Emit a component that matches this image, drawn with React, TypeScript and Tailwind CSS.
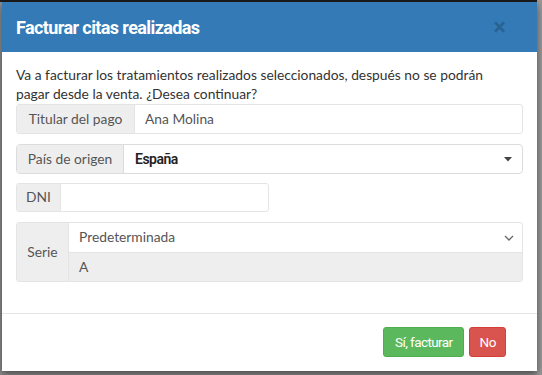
import React from "react";

export default function App() {
  const body = { fontFamily: "Lato, 'Liberation Sans', sans-serif" };
  const rob = { fontFamily: "Roboto, 'Liberation Sans', sans-serif" };
  return (
    <div className="relative w-[542px] h-[375px] overflow-hidden bg-[#8f8f8f]">
      <div className="absolute left-0 top-0 w-full h-[2px] bg-[#1b1b1b]" />
      <div className="absolute right-0 top-0 w-[5px] h-full bg-[#9a9a9a]" />
      <div className="absolute left-[2px] top-[2px] w-[535px] h-[369px] bg-white flex flex-col shadow-[0_3px_8px_rgba(0,0,0,0.5)]">
        <div className="h-[50px] bg-[#337ab7] flex items-center justify-between pl-[14px] pr-[31px] shrink-0">
          <span className="text-white font-bold text-[18px] tracking-[-0.6px]" style={rob}>Facturar citas realizadas</span>
          <span className="text-[24px] font-bold leading-none text-black/20" style={rob}>×</span>
        </div>
        <div className="px-[14px] pt-[13px] text-[13.8px] text-[#333] flex-1" style={body}>
          <p className="leading-[19px] whitespace-nowrap">
            Va a facturar los tratamientos realizados seleccionados, después no se podrán
            <br />
            pagar desde la venta. ¿Desea continuar?
          </p>
          <div className="mt-[1px] flex h-[30px] w-[507px] border border-[#e4e4e4] rounded-[3px] overflow-hidden">
            <div className="w-[118px] bg-[#eeeeee] border-r border-[#e4e4e4] flex items-center justify-center text-[#555]">Titular del pago</div>
            <div className="flex-1 flex items-center pl-[10px] text-[#555]">Ana Molina</div>
          </div>
          <div className="mt-[10px] flex h-[30px] w-[507px] border border-[#dcdcdc] rounded-[4px] overflow-hidden">
            <div className="w-[107px] bg-[#eeeeee] border-r border-[#dcdcdc] flex items-center justify-center text-[#555]">País de origen</div>
            <div className="flex-1 flex items-center justify-between pl-[11px] pr-[10px]">
              <span className="text-[#222] font-semibold text-[14px] tracking-[-0.5px]" style={rob}>España</span>
              <svg width="8" height="5" viewBox="0 0 8 5"><path d="M0 0 H8 L4 4.5 Z" fill="#444" /></svg>
            </div>
          </div>
          <div className="mt-[9px] flex h-[29px] w-[253px] border border-[#e4e4e4] rounded-[3px] overflow-hidden">
            <div className="w-[44px] bg-[#eeeeee] border-r border-[#e4e4e4] flex items-center justify-center text-[#555]">DNI</div>
            <div className="flex-1" />
          </div>
          <div className="mt-[10px] flex h-[60px] w-[507px] border border-[#e4e4e4] rounded-[3px] overflow-hidden">
            <div className="w-[52px] bg-[#eeeeee] border-r border-[#e4e4e4] flex items-center justify-center text-[#555]">Serie</div>
            <div className="flex-1 flex flex-col">
              <div className="h-[30px] flex items-center justify-between pl-[10px] pr-[8px] border-b border-[#e4e4e4] text-[#555]">
                <span>Predeterminada</span>
                <svg width="10" height="6" viewBox="0 0 10 6"><path d="M1 1 L5 5 L9 1" stroke="#666" strokeWidth="1.3" fill="none" /></svg>
              </div>
              <div className="flex-1 bg-[#eeeeee] flex items-center pl-[10px] text-[#555]">A</div>
            </div>
          </div>
        </div>
        <div className="h-[58px] border-t border-[#e5e5e5] flex items-start justify-end pt-[13px] pr-[31px] gap-[5px] shrink-0" style={rob}>
          <button className="h-[30px] px-[11px] bg-[#5cb85c] text-white text-[13.5px] tracking-[-0.6px] rounded-[3px] border border-[#4cae4c]">Sí, facturar</button>
          <button className="h-[30px] px-[9px] bg-[#d9534f] text-white text-[13.5px] tracking-[-0.4px] rounded-[3px] border border-[#d43f3a]">No</button>
        </div>
      </div>
    </div>
  );
}
